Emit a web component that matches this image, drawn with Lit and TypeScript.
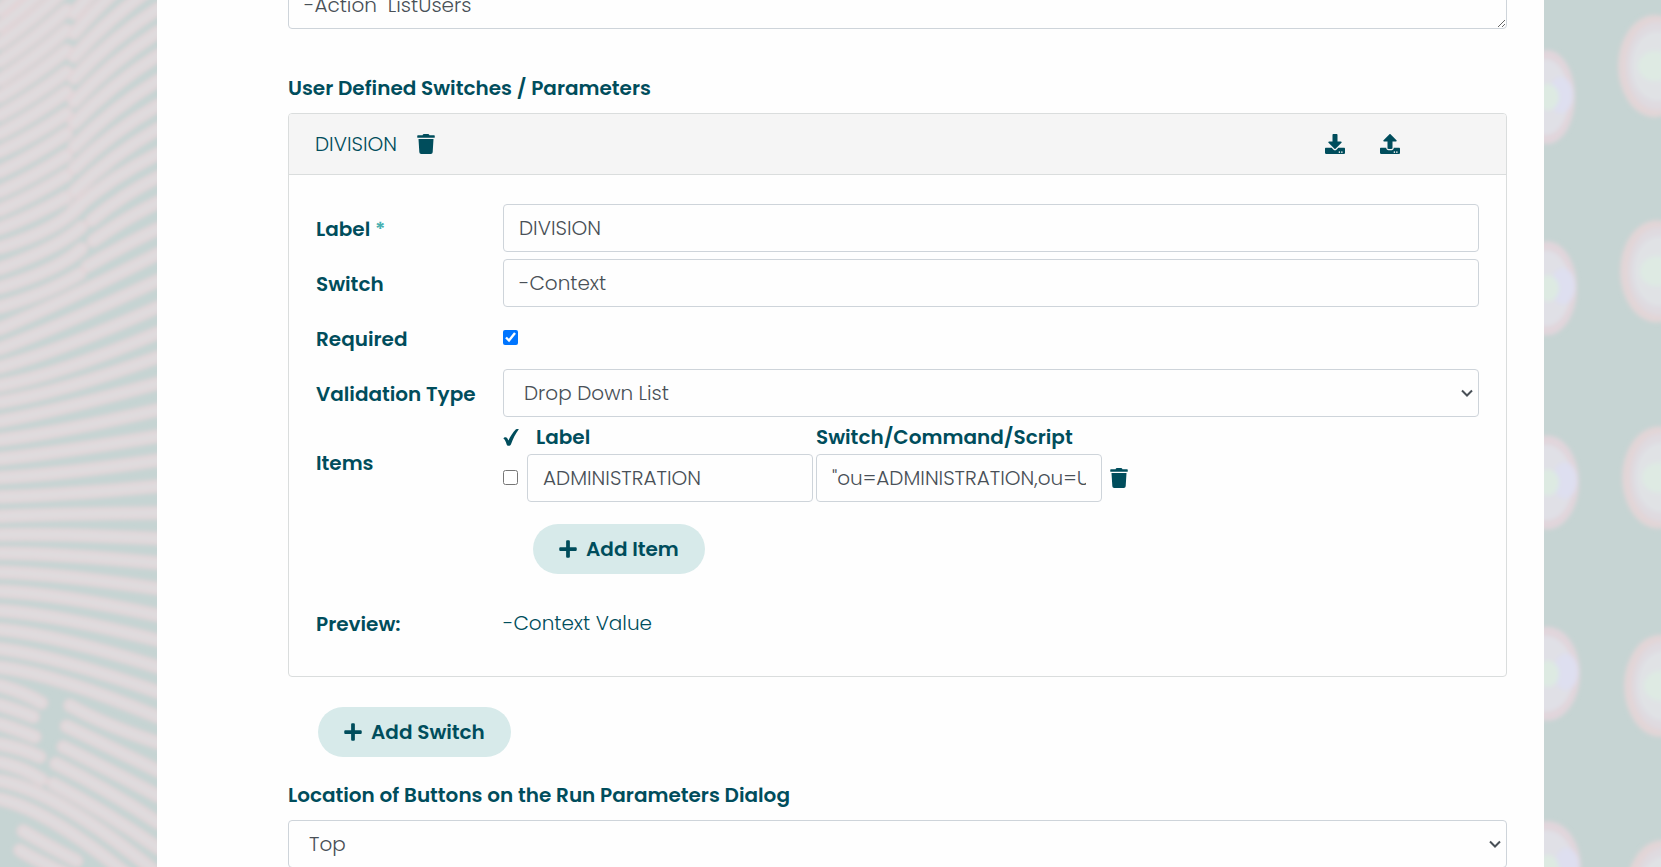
import { LitElement, html, svg, css } from "lit";
import { customElement, property, state } from "lit/decorators.js";

const DRIVE_LIGHTS =
  "m-124 88c0-11-9-20-20-20s-20 9-20 20 9 20 20 20 20-9 20-20zm64 0c0-11-9-20-20-20s-20 9-20 20 9 20 20 20 20-9 20-20z";

const ICONS: Record<string, { box: string; width: number; height: number; path: string }> = {
  trash: {
    box: "0 0 448 512",
    width: 18,
    height: 20,
    path: "M432 32H312l-9.4-18.7A24 24 0 0 0 281.1 0H166.8a23.72 23.72 0 0 0-21.4 13.3L136 32H16A16 16 0 0 0 0 48v32a16 16 0 0 0 16 16h416a16 16 0 0 0 16-16V48a16 16 0 0 0-16-16zM53.2 467a48 48 0 0 0 47.9 45h245.8a48 48 0 0 0 47.9-45L416 128H32z",
  },
  download: {
    box: "0 0 512 512",
    width: 20,
    height: 20,
    path:
      "M216 0h80c13.3 0 24 10.7 24 24v168h87.7c17.8 0 26.7 21.5 14.1 34.1L269.7 378.3c-7.5 7.5-19.8 7.5-27.3 0L90.1 226.1c-12.6-12.6-3.7-34.1 14.1-34.1H192V24c0-13.3 10.7-24 24-24zm296 376v112c0 13.3-10.7 24-24 24H24c-13.3 0-24-10.7-24-24V376c0-13.3 10.7-24 24-24h146.7l49 49c20.1 20.1 52.5 20.1 72.6 0l49-49H488c13.3 0 24 10.7 24 24z" +
      DRIVE_LIGHTS,
  },
  upload: {
    box: "0 0 512 512",
    width: 20,
    height: 20,
    path:
      "M296 384h-80c-13.3 0-24-10.7-24-24V192h-87.7c-17.8 0-26.7-21.5-14.1-34.1L242.3 5.7c7.5-7.5 19.8-7.5 27.3 0l152.2 152.2c12.6 12.6 3.7 34.1-14.1 34.1H320v168c0 13.3-10.7 24-24 24zm216-8v112c0 13.3-10.7 24-24 24H24c-13.3 0-24-10.7-24-24V376c0-13.3 10.7-24 24-24h136v8c0 30.9 25.1 56 56 56h80c30.9 0 56-25.1 56-56v-8h136c13.3 0 24 10.7 24 24z" +
      DRIVE_LIGHTS,
  },
  plus: {
    box: "0 0 448 512",
    width: 18,
    height: 20,
    path: "M416 208H272V64c0-17.67-14.33-32-32-32h-32c-17.67 0-32 14.33-32 32v144H32c-17.67 0-32 14.33-32 32v32c0 17.67 14.33 32 32 32h144v144c0 17.67 14.33 32 32 32h32c17.67 0 32-14.33 32-32V304h144c17.67 0 32-14.33 32-32v-32c0-17.67-14.33-32-32-32z",
  },
  tick: {
    box: "0 0 16 17",
    width: 16,
    height: 17,
    path: "M.4 9.6C.9 8.3 3 7.7 4.100 8.900 4.700 9.600 5 10.600 5.400 11.600 7.500 7.300 9.900 3.300 12.700.6 13.600 0 15 0 15.800.2 12.500 4.600 10 9.700 8 15.200 7.500 16.400 6.700 16.800 5.600 16.800 4.500 16.800 4 16.300 3.600 15.300 2.900 12.900 2.100 10.900 .4 9.600Z",
  },
};

const icon = (name: string) => {
  const i = ICONS[name];
  return html`<svg class="icon" viewBox=${i.box} width=${i.width} height=${i.height} aria-hidden="true">
    <path d=${i.path} />
  </svg>`;
};

/* Each band runs through three points, on a canvas of 471 x 2601. */
type Band = [number, number, number, number, number, number];

const bands: Band[] = [];
const left = [
  [-25, -210], [30, -155], [80, -95], [130, -35], [185, 30], [240, 90], [290, 150], [345, 215], [400, 275],
  [455, 340], [515, 400], [575, 465], [630, 525], [685, 590],
];
left.forEach(([a, b]) => bands.push([0, a, 102, (a + b) / 2 + 4, 200, b]));
const right = [
  [40, -200], [100, -130], [170, -50], [235, 25], [305, 95], [370, 165], [440, 240], [505, 315], [575, 385], [628, 460],
];
right.forEach(([a, b]) => bands.push([222, a, 340, (a + b) / 2 - 6, 475, b]));
bands.push([275, 660, 370, 590, 475, 530], [280, 722, 370, 662, 475, 605], [262, 798, 370, 738, 475, 685]);
bands.push([0, 742, 150, 682, 245, 610], [0, 805, 150, 742, 245, 680], [0, 862, 150, 806, 245, 745], [0, 920, 130, 875, 240, 820]);
const through = [
  [985, 893, 760], [1045, 962, 840], [1100, 1032, 920], [1155, 1100, 997], [1205, 1158, 1070], [1262, 1218, 1148],
  [1318, 1285, 1228], [1375, 1349, 1307], [1431, 1414, 1379], [1489, 1479, 1457], [1547, 1541, 1537],
  [1602, 1603, 1614], [1657, 1665, 1687], [1714, 1729, 1764], [1771, 1793, 1844], [1829, 1858, 1919],
  [1886, 1923, 1999], [1944, 1988, 2074], [1999, 2048, 2149], [2339, 2425, 2620], [2394, 2490, 2700],
];
through.forEach(([a, b, c]) => bands.push([0, a, 205, b, 475, c]));
bands.push([0, 2054, 70, 2078, 125, 2106], [0, 2112, 60, 2132, 100, 2148], [0, 2169, 60, 2190, 105, 2208]);
bands.push([0, 2229, 65, 2246, 120, 2268], [0, 2284, 65, 2304, 125, 2336], [70, 2490, 130, 2525, 230, 2580], [60, 2548, 110, 2576, 200, 2620]);
bands.push([210, 2114, 330, 2172, 475, 2226], [200, 2176, 320, 2234, 475, 2310], [190, 2238, 320, 2304, 475, 2386], [168, 2288, 320, 2370, 475, 2466], [160, 2348, 320, 2440, 475, 2542]);

const bandPath = ([x1, y1, x2, y2, x3, y3]: Band) =>
  `M${x1} ${y1}Q${2 * x2 - (x1 + x3) / 2} ${2 * y2 - (y1 + y3) / 2} ${x3} ${y3}`;
const bandsPath = bands.map(bandPath).join("");

const inner = [[97, 28], [288, 30], [482, 32], [673, 33], [867, 34]];
const outer = [[66, 111], [271, 113], [477, 115], [685, 117], [890, 119]];

@customElement("field-row")
export class FieldRow extends LitElement {
  static styles = css`
    :host {
      display: grid;
      grid-template-columns: 187px minmax(0, 1fr);
      align-items: center;
      min-height: 48px;
    }
  `;
  render() {
    return html`<slot name="label"></slot><slot></slot>`;
  }
}

@customElement("app-root")
export class AppRoot extends LitElement {
  @property() command = "-Action  ListUsers";
  @state() private name = "DIVISION";
  @state() private flag = "-Context";

  static styles = css`
    :host {
      display: block;
      height: 100vh;
      overflow: hidden;
      background: #c6d4d3;
      color: #004d5c;
      font: 300 20px/30px Poppins, Inter, "Open Sans", sans-serif;
    }
    * {
      box-sizing: border-box;
    }
    .page {
      display: grid;
      grid-template-columns: 157px minmax(0, 1fr) 117px;
      height: 100%;
    }
    .art {
      display: block;
      width: 100%;
      height: 100%;
    }
    .panel {
      min-width: 0;
      padding: 0 37px 0 131px;
      background: #fefefe;
    }
    .form {
      display: flex;
      flex-direction: column;
      margin-top: -49px;
    }
    .strong,
    h2 {
      margin: 0;
      font-size: 20px;
      font-weight: 600;
      line-height: 30px;
    }
    h2 {
      margin-bottom: 10px;
    }
    .side {
      padding-top: 2px;
    }
    .star {
      color: #45b0b0;
    }
    .field {
      display: block;
      width: 100%;
      height: 48px;
      margin: 0;
      padding: 8px 15px;
      border: 1px solid #ced4da;
      border-radius: 4px;
      background: #fefefe;
      color: #495057;
      font: inherit;
    }
    .area {
      height: 78px;
      margin-bottom: 44px;
      overflow: hidden;
    }
    select.field {
      padding: 8px 30px 8px 20px;
      appearance: none;
      background: #fefefe
        url("data:image/svg+xml,%3Csvg xmlns='http://www.w3.org/2000/svg' width='12' height='8'%3E%3Cpath d='M1 1.500l5 5 5-5' fill='none' stroke='%23495057' stroke-width='2'/%3E%3C/svg%3E")
        no-repeat right 5px center;
    }
    .card {
      border: 1px solid #dadddd;
      border-radius: 4px;
    }
    .head {
      display: flex;
      align-items: center;
      height: 61px;
      padding: 0 106px 0 26px;
      border-bottom: 1px solid #dadddd;
      border-radius: 3px 3px 0 0;
      background: #f5f5f5;
    }
    .tools {
      display: flex;
      gap: 35px;
      margin-left: auto;
    }
    .icon {
      display: block;
      fill: currentColor;
    }
    .plain {
      padding: 0;
      border: 0;
      background: none;
      color: inherit;
      cursor: pointer;
    }
    .remove {
      margin-left: 20px;
    }
    .body {
      display: grid;
      gap: 7px;
      padding: 29px 27px;
    }
    .check {
      width: 15px;
      height: 15px;
      margin: 0 0 2px;
      accent-color: #0075ff;
    }
    .top {
      align-items: start;
    }
    .top .side {
      padding-top: 24px;
    }
    .items {
      display: grid;
      grid-template-columns: 21px 286px 286px auto;
      justify-content: start;
      align-items: center;
      gap: 4px 3px;
    }
    .title {
      line-height: 26px;
    }
    .indent {
      padding-left: 9px;
    }
    .drop {
      margin-left: 5px;
    }
    .pill {
      display: inline-flex;
      align-items: center;
      align-self: flex-start;
      gap: 9px;
      height: 50px;
      margin: 22px 0 0 30px;
      padding: 0 26px;
      border: 0;
      border-radius: 25px;
      background: #d7eaea;
      color: inherit;
      font: inherit;
      font-weight: 600;
      cursor: pointer;
    }
    .preview {
      margin-top: 18px;
    }
    .add {
      margin: 30px 0 23px 30px;
    }
  `;

  private stripes() {
    return html`<svg class="art" viewBox="0 0 471 2601" preserveAspectRatio="xMaxYMin slice" aria-hidden="true">
      <defs>
        <filter id="soft" x="-5%" y="-5%" width="110%" height="110%"><feGaussianBlur stdDeviation="7" /></filter>
      </defs>
      <g fill="none" stroke-linecap="round" filter="url(#soft)">
        <path d=${bandsPath} stroke="#e2d5d8" stroke-width="40" />
        <path d=${bandsPath} stroke="#dfdcde" stroke-width="20" />
      </g>
    </svg>`;
  }

  private lights() {
    return html`<svg class="art" viewBox="0 0 117 867" preserveAspectRatio="xMinYMin slice" aria-hidden="true">
      <defs>
        <filter id="haze" x="-20%" y="-20%" width="140%" height="140%"><feGaussianBlur stdDeviation="2" /></filter>
      </defs>
      <g filter="url(#haze)">
        ${inner.map(
          ([y, r]) => svg`
            <ellipse cx="3" cy=${y} rx=${r} ry="47" fill="#e1d5db" />
            <ellipse cx="2" cy=${y} rx=${r - 5} ry="38" fill="#e0e0e6" />
            <ellipse cx=${r - 11} cy=${y - 2} rx="12" ry="18" fill="#dedff0" />
            <ellipse cx="4" cy=${y} rx="11" ry="13" fill="#ddeae2" />`
        )}
        ${outer.map(
          ([y, x]) => svg`
            <ellipse cx=${x} cy=${y} rx="37" ry="51" fill="#e2d5d7" />
            <ellipse cx=${x + 2} cy=${y} rx="31" ry="44" fill="#dfdae0" />
            <ellipse cx=${x + 2} cy=${y} rx="26" ry="35" fill="#e0e2e5" />
            <ellipse cx=${x} cy=${y} rx="17" ry="15" fill="#deeae3" />`
        )}
      </g>
    </svg>`;
  }

  render() {
    return html`<div class="page">
      ${this.stripes()}
      <main class="panel">
        <form class="form" @submit=${(e: Event) => e.preventDefault()}>
          <textarea class="field area" aria-label="Command" .value=${"\n" + this.command}></textarea>
          <h2>User Defined Switches / Parameters</h2>
          <section class="card">
            <header class="head">
              <span>${this.name}</span>
              <button class="plain remove" type="button" aria-label="Delete switch">${icon("trash")}</button>
              <div class="tools">
                <button class="plain" type="button" aria-label="Move down">${icon("download")}</button>
                <button class="plain" type="button" aria-label="Move up">${icon("upload")}</button>
              </div>
            </header>
            <div class="body">
              <field-row>
                <label slot="label" class="strong side" for="name">Label <span class="star">*</span></label>
                <input id="name" class="field" .value=${this.name}
                  @input=${(e: Event) => (this.name = (e.target as HTMLInputElement).value)} />
              </field-row>
              <field-row>
                <label slot="label" class="strong side" for="flag">Switch</label>
                <input id="flag" class="field" .value=${this.flag}
                  @input=${(e: Event) => (this.flag = (e.target as HTMLInputElement).value)} />
              </field-row>
              <field-row>
                <label slot="label" class="strong side" for="required">Required</label>
                <input id="required" class="check" type="checkbox" checked />
              </field-row>
              <field-row>
                <label slot="label" class="strong side" for="type">Validation Type</label>
                <select id="type" class="field"><option>Drop Down List</option></select>
              </field-row>
              <field-row class="top">
                <span slot="label" class="strong side">Items</span>
                <div>
                  <div class="items">
                    ${icon("tick")}
                    <span class="strong title indent">Label</span>
                    <span class="strong title">Switch/Command/Script</span>
                    <span></span>
                    <input class="check" type="checkbox" aria-label="Selected" />
                    <input class="field" aria-label="Item label" value="ADMINISTRATION" />
                    <input class="field" aria-label="Item script" value='"ou=ADMINISTRATION,ou=Users' />
                    <button class="plain drop" type="button" aria-label="Delete item">${icon("trash")}</button>
                  </div>
                  <button class="pill" type="button">${icon("plus")}Add Item</button>
                </div>
              </field-row>
              <field-row class="preview">
                <span slot="label" class="strong side">Preview:</span>
                <span>${this.flag} Value</span>
              </field-row>
            </div>
          </section>
          <button class="pill add" type="button">${icon("plus")}Add Switch</button>
          <h2><label for="location">Location of Buttons on the Run Parameters Dialog</label></h2>
          <select id="location" class="field"><option>Top</option></select>
        </form>
      </main>
      ${this.lights()}
    </div>`;
  }
}
